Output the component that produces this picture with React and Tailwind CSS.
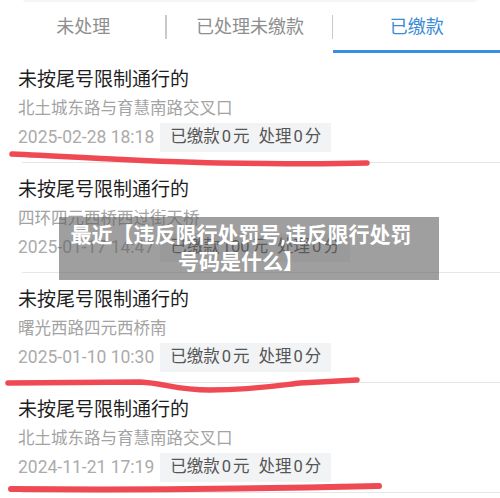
import React from "react";

const tabs = ["未处理", "已处理未缴款", "已缴款"];

const records = [
  { place: "北土城东路与育慧南路交叉口", time: "2025-02-28 18:18", money: "0" },
  { place: "四环四元西桥西过街天桥", time: "2025-01-17 14:47", money: "100" },
  { place: "曙光西路四元西桥南", time: "2025-01-10 10:30", money: "0" },
  { place: "北土城东路与育慧南路交叉口", time: "2024-11-21 17:19", money: "0" },
];

const Record = ({ item }) => (
  <div className="flex flex-col h-[110px]">
    <div className="flex flex-col pl-[18px] pt-[14px] flex-1">
      <span className="text-[19px] leading-[26px] text-[#1f1f1f]">未按尾号限制通行的</span>
      <span className="mt-[4px] text-[16.5px] leading-[24px] text-[#a3a3a3]">{item.place}</span>
      <div className="mt-[2px] flex items-center gap-[6px]">
        <span className="text-[17.5px] leading-[29px] text-[#ababab]">{item.time}</span>
        <span className="h-[29px] flex items-center px-[10px] bg-[#f2f3f4] text-[16.5px] text-[#555]">
          已缴款<span className="mx-[2px]">{item.money}</span>元
          <span className="ml-[9px]">处理</span>
          <span className="mx-[2px]">0</span>分
        </span>
      </div>
    </div>
    <div className="ml-[22px] h-px bg-[#e6e6e6]" />
  </div>
);

export default function App() {
  return (
    <div className="relative w-[500px] h-[498px] overflow-hidden bg-white font-[Roboto,'Noto_Sans_CJK_SC',sans-serif]">
      <div className="mx-[23px] h-[2px] rounded-b bg-[#f6f6f6]" />

      {/* tabs */}
      <div className="flex h-[51px]">
        {tabs.map((t, i) => (
          <div key={t} className="relative flex-1 flex flex-col">
            <div className="flex-1 flex items-center justify-center">
              <span className={`text-[18px] leading-[24px] mb-[-2px] ${i === 2 ? "text-[#3a8bd6]" : "text-[#8e8e8e]"}`}>
                {t}
              </span>
            </div>
            {i < 2 && <div className="absolute right-0 top-[13px] w-[1.5px] h-[24px] bg-[#c9c9c9]" />}
            <div className={`h-[3px] ${i === 2 ? "bg-[#3a8ee0]" : "bg-transparent"}`} />
          </div>
        ))}
      </div>

      {/* list */}
      <div className="flex flex-col">
        {records.map((r, i) => (
          <Record key={i} item={r} />
        ))}
      </div>

      {/* red marker strokes */}
      <svg className="absolute inset-0 pointer-events-none" width="500" height="498" viewBox="0 0 500 498">
        <g fill="none" stroke="#ef4a53" strokeLinecap="round">
          <path d="M12 154 C80 157 150 162 220 163 S330 164 367 163" strokeWidth="5.5" />
          <path d="M8 383 L140 382 C165 383 175 390 210 390 C250 390 275 386 300 383 L357 380" strokeWidth="5.5" />
          <path d="M11 489 C120 490 250 489 379 486" strokeWidth="6" />
        </g>
      </svg>

      {/* caption overlay */}
      <div className="absolute left-[59px] top-[217px] w-[380px] h-[63px] pr-[16px] bg-[rgba(95,95,95,0.6)] flex flex-col items-center justify-center text-white font-bold text-[21px] leading-[27px]">
        <span className="whitespace-nowrap">最近【违反限行处罚号,违反限行处罚</span>
        <span className="whitespace-nowrap">号码是什么】</span>
      </div>
    </div>
  );
}
